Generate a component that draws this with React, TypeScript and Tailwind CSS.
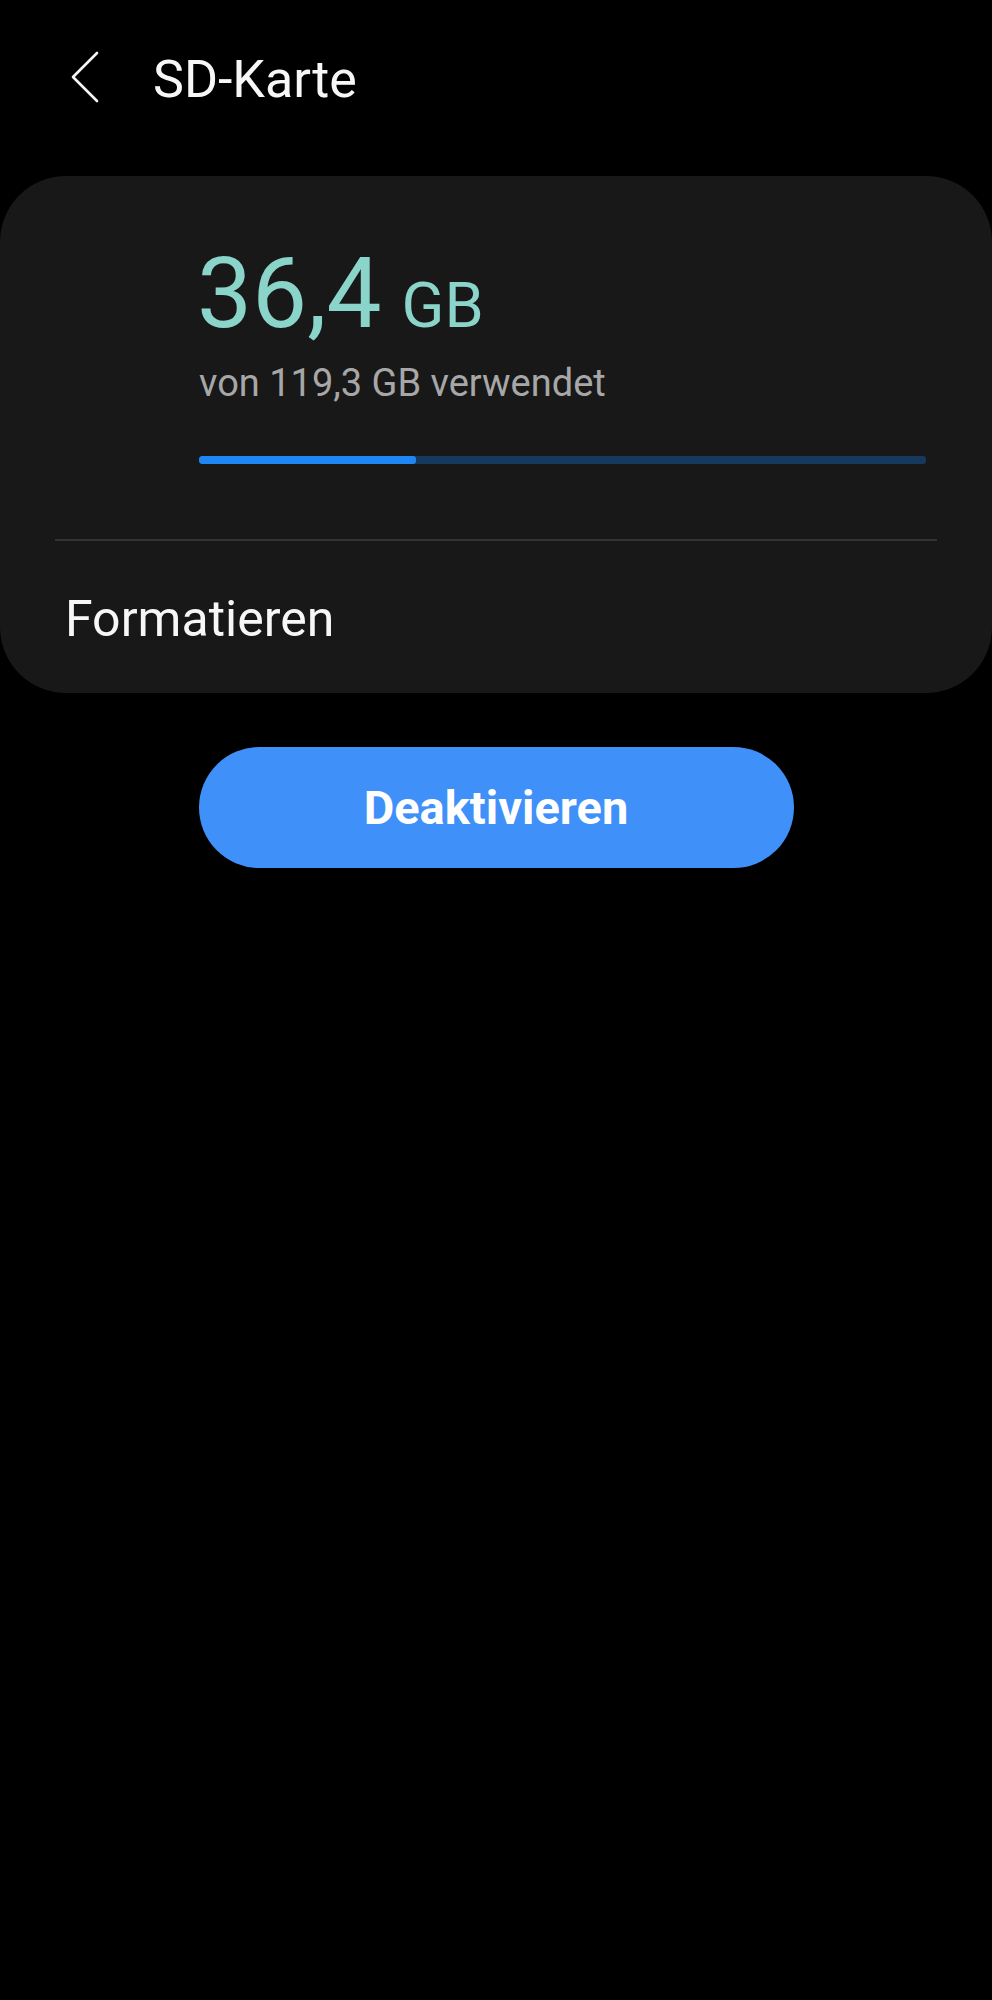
import React from 'react';

const used = 36.4;
const total = 119.3;

const BackIcon = () => (
  <svg width="30" height="52" viewBox="0 0 30 52" fill="none" className="mb-[6px]">
    <path d="M26 2 L2 26 L26 50" stroke="#f5f5f5" strokeWidth="2.6" strokeLinecap="round" strokeLinejoin="round" />
  </svg>
);

export default function App() {
  const pct = (used / total) * 98;

  return (
    <div className="min-h-screen bg-black text-white font-['Roboto','Liberation_Sans',sans-serif]">
      {/* Top bar */}
      <header className="h-[160px] flex items-center pl-[71px]">
        <BackIcon />
        <h1 className="ml-[52px] text-[52px] leading-none font-normal text-[#f7f7f7]">SD-Karte</h1>
      </header>

      {/* Storage card */}
      <section className="mt-[16px] rounded-[66px] bg-[#181818] pt-[69px] pb-[49px]">
        <div className="pl-[199px] pr-[66px]">
          <div className="text-[98px] leading-none text-[#8ad4ca] -ml-[2px] whitespace-nowrap">
            36,4<span className="ml-[20px] text-[63px]">GB</span>
          </div>
          <p className="mt-[21px] text-[38px] leading-none text-[#a7a7a7]">von 119,3 GB verwendet</p>
          <div className="mt-[54px] h-[8px] rounded-[3px] bg-[#163a5e] overflow-hidden">
            <div className="h-full rounded-[3px] bg-[#1e87f4]" style={{ width: `${pct}%` }} />
          </div>
        </div>

        <div className="mt-[75px] mx-[55px] h-[2px] bg-[#333333]" />

        <div className="mt-[53px] pl-[65px] text-[50px] leading-none text-[#f7f7f7]">Formatieren</div>
      </section>

      {/* Action */}
      <div className="mt-[54px] flex justify-center">
        <button className="w-[595px] h-[121px] rounded-full bg-[#4090fa] text-[47px] font-bold text-white leading-none">
          Deaktivieren
        </button>
      </div>
    </div>
  );
}
